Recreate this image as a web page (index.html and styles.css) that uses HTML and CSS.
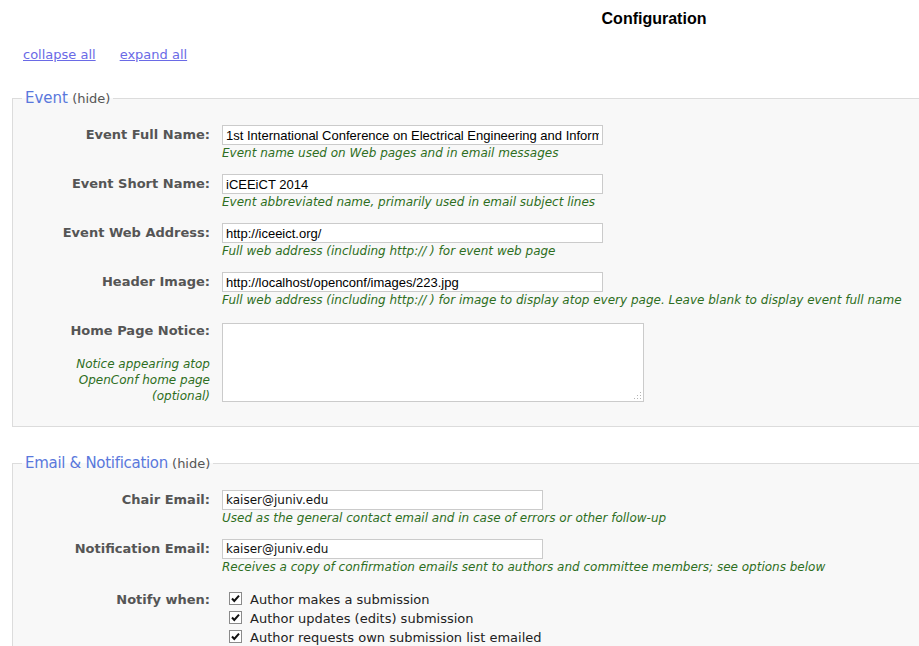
FILE: index.html
```html
<!DOCTYPE html>
<html>
<head>
<meta charset="utf-8">
<title>Configuration</title>
<link rel="stylesheet" href="styles.css">
</head>
<body>
<div class="page">
  <h1 class="title">Configuration</h1>
  <div class="links"><a href="#">collapse all</a><a href="#">expand all</a></div>

  <fieldset class="section section-event">
    <legend><span class="legend-name">Event</span> <span class="hide">(hide)</span></legend>
    <div class="row">
      <label class="lbl">Event Full Name:</label>
      <div class="field">
        <input class="txt" type="text" value="1st International Conference on Electrical Engineering and Information &amp; Communication Technology">
        <div class="help">Event name used on Web pages and in email messages</div>
      </div>
    </div>
    <div class="row">
      <label class="lbl">Event Short Name:</label>
      <div class="field">
        <input class="txt" type="text" value="iCEEiCT 2014">
        <div class="help">Event abbreviated name, primarily used in email subject lines</div>
      </div>
    </div>
    <div class="row">
      <label class="lbl">Event Web Address:</label>
      <div class="field">
        <input class="txt" type="text" value="http://iceeict.org/">
        <div class="help">Full web address (including http:// ) for event web page</div>
      </div>
    </div>
    <div class="row">
      <label class="lbl">Header Image:</label>
      <div class="field">
        <input class="txt" type="text" value="http://localhost/openconf/images/223.jpg">
        <div class="help">Full web address (including http:// ) for image to display atop every page. Leave blank to display event full name</div>
      </div>
    </div>
    <div class="row row-notice">
      <div class="lbl-col">
        <label class="lbl lbl-top">Home Page Notice:</label>
        <div class="help help-side">Notice appearing atop<br>OpenConf home page<br>(optional)</div>
      </div>
      <div class="field">
        <div class="area-wrap">
          <textarea class="area"></textarea>
          <svg class="grip" width="9" height="9" viewBox="0 0 9 9"><g fill="#b4b4b4"><rect x="7" y="1" width="1" height="1"/><rect x="4" y="4" width="1" height="1"/><rect x="7" y="4" width="1" height="1"/><rect x="1" y="7" width="1" height="1"/><rect x="4" y="7" width="1" height="1"/><rect x="7" y="7" width="1" height="1"/></g></svg>
        </div>
      </div>
    </div>
  </fieldset>

  <fieldset class="section section-email">
    <legend><span class="legend-name">Email &amp; Notification</span> <span class="hide">(hide)</span></legend>
    <div class="row">
      <label class="lbl">Chair Email:</label>
      <div class="field">
        <input class="txt email" type="text" value="kaiser@juniv.edu">
        <div class="help">Used as the general contact email and in case of errors or other follow-up</div>
      </div>
    </div>
    <div class="row">
      <label class="lbl">Notification Email:</label>
      <div class="field">
        <input class="txt email" type="text" value="kaiser@juniv.edu">
        <div class="help">Receives a copy of confirmation emails sent to authors and committee members; see options below</div>
      </div>
    </div>
    <div class="row row-notify">
      <label class="lbl lbl-notify">Notify when:</label>
      <div class="field checks">
        <div class="check"><svg class="cb" width="13" height="13" viewBox="0 0 13 13"><rect x="0.5" y="0.5" width="12" height="12" fill="#fff" stroke="#8a8a8a"/><polyline points="3,6.5 5.3,9 10,3.6" fill="none" stroke="#111" stroke-width="2"/></svg><span>Author makes a submission</span></div>
        <div class="check"><svg class="cb" width="13" height="13" viewBox="0 0 13 13"><rect x="0.5" y="0.5" width="12" height="12" fill="#fff" stroke="#8a8a8a"/><polyline points="3,6.5 5.3,9 10,3.6" fill="none" stroke="#111" stroke-width="2"/></svg><span>Author updates (edits) submission</span></div>
        <div class="check"><svg class="cb" width="13" height="13" viewBox="0 0 13 13"><rect x="0.5" y="0.5" width="12" height="12" fill="#fff" stroke="#8a8a8a"/><polyline points="3,6.5 5.3,9 10,3.6" fill="none" stroke="#111" stroke-width="2"/></svg><span>Author requests own submission list emailed</span></div>
      </div>
    </div>
  </fieldset>
</div>
</body>
</html>
```
FILE: styles.css
```css
html {
  overflow: hidden;
}
body {
  margin: 0;
  background: #fff;
  font-family: "DejaVu Sans", Verdana, sans-serif;
  font-size: 13px;
  color: #222;
}
.page {
  width: 1308px;
}
.title {
  margin: 0;
  padding-top: 10px;
  font-family: "Liberation Sans", Arial, sans-serif;
  font-size: 16px;
  line-height: 18px;
  font-weight: bold;
  color: #000;
  text-align: center;
}
.links {
  margin-top: 19px;
  padding-left: 23px;
  line-height: 16px;
  font-size: 13px;
}
.links a {
  color: #6a6ae6;
  text-decoration: underline;
  margin-right: 24px;
}
.section {
  margin: 26px 12px 0 12px;
  padding: 18px 0 22px 0;
  border: 1px solid #dcdcdc;
  background: #f8f8f8;
  min-width: 0;
}
.section-email {
  margin-top: 27px;
}
.section legend {
  margin-left: 9px;
  padding: 0 3px;
  line-height: 18px;
  height: 18px;
}
.legend-name {
  font-size: 15px;
  color: #5a78dc;
}
.section-email .legend-name {
  letter-spacing: -0.3px;
}
.hide {
  font-size: 13px;
  color: #555;
}
.row {
  display: grid;
  grid-template-columns: 197px 1fr;
  column-gap: 12px;
  align-items: start;
}
.row + .row {
  margin-top: 13px;
}
.lbl {
  display: block;
  text-align: right;
  font-weight: bold;
  color: #555;
  font-size: 13px;
  line-height: 20px;
}
.field {
  min-width: 0;
}
.txt {
  display: block;
  box-sizing: border-box;
  width: 381px;
  height: 20px;
  margin: 0;
  padding: 0 3px;
  border: 1px solid #cbcbcb;
  background: #fff;
  font-family: "Liberation Sans", Arial, sans-serif;
  font-size: 13px;
  color: #000;
  outline: none;
}
.txt.email {
  width: 321px;
  font-family: "DejaVu Sans", Verdana, sans-serif;
  font-size: 12px;
  color: #111;
}
.help {
  font-style: italic;
  font-size: 12px;
  line-height: 16px;
  color: #2e6e22;
  white-space: nowrap;
}
.row-notice {
  margin-top: 15px !important;
}
.lbl-top {
  line-height: 16px;
}
.help-side {
  margin-top: 17px;
  text-align: right;
}
.area-wrap {
  position: relative;
  width: 422px;
  height: 79px;
}
.area {
  display: block;
  box-sizing: border-box;
  width: 422px;
  height: 79px;
  margin: 0;
  border: 1px solid #cbcbcb;
  background: #fff;
  resize: none;
  outline: none;
  font-family: "Liberation Sans", Arial, sans-serif;
  font-size: 13px;
}
.grip {
  position: absolute;
  right: 2px;
  bottom: 2px;
}
.row-notify {
  padding-top: 2px;
}
.lbl-notify {
  line-height: 19px;
}
.checks {
  padding-left: 7px;
}
.check {
  display: flex;
  align-items: center;
  height: 19px;
  line-height: 19px;
  font-size: 13px;
  color: #222;
}
.cb {
  flex: none;
  margin-right: 8px;
  margin-top: -2px;
}
```
